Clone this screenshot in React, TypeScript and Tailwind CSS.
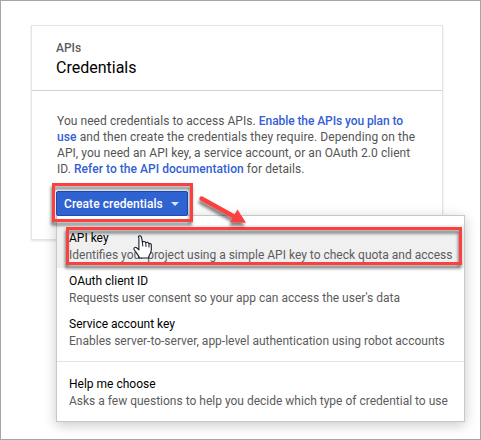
import React from "react";

function MenuItem({ title, text, active }: { title: string; text: string; active?: boolean }) {
  return (
    <div className={`h-[43px] pl-3 pt-[5px] ${active ? "bg-[#f0f0f0]" : ""}`}>
      <div className="text-black">{title}</div>
      <div className="text-[#5c5c5c]">{text}</div>
    </div>
  );
}

export default function App() {
  return (
    <div className="relative h-[440px] w-[481px] overflow-hidden whitespace-nowrap border border-[#a6a6a6] bg-white pl-[30px] pt-6 font-['Roboto',sans-serif] text-xs">
      <div className="h-[215px] w-[412px] border border-[#e5e5e5] bg-white shadow-[0_1px_2px_rgba(0,0,0,0.12)]">
        <header className="h-[65px] border-b border-[#d0d0d0] pl-6 pt-[14px]">
          <div className="text-xs font-medium leading-4 text-[#5c5c5c]">APIs</div>
          <h1 className="pt-[2px] text-base leading-5 text-black">Credentials</h1>
        </header>
        <div className="pl-[25px] pt-[22px] leading-4 tracking-[0.06px] text-[#555]">
          <p>You need credentials to access APIs. <span className="font-medium tracking-[-0.08px] text-[#3460d4]">Enable the APIs you plan to</span></p>
          <p className="tracking-[0.1px]"><span className="font-medium text-[#3460d4]">use</span> and then create the credentials they require. Depending on the</p>
          <p>API, you need an API key, a service account, or an OAuth 2.0 client</p>
          <p className="tracking-[0.08px]">ID. <span className="font-medium tracking-[0.04px] text-[#3460d4]">Refer to the API documentation</span> for details.</p>
        </div>
      </div>

      <div className="absolute left-[55px] top-[214px] h-[207px] w-[409px] border border-[#c8c8c8] bg-white pt-[9px] leading-[17px] shadow-[0_3px_12px_rgba(0,0,0,0.22)]">
        <MenuItem active title="API key" text="Identifies your project using a simple API key to check quota and access" />
        <MenuItem title="OAuth client ID" text="Requests user consent so your app can access the user's data" />
        <MenuItem title="Service account key" text="Enables server-to-server, app-level authentication using robot accounts" />
        <div className="mb-[9px] mt-[7px] h-px bg-[#e3e3e3]" />
        <MenuItem title="Help me choose" text="Asks a few questions to help you decide which type of credential to use" />
      </div>

      <button className="absolute left-[55px] top-[190px] flex h-[25px] w-[132px] items-center rounded-[2px] border border-[#1c4bb8] bg-[#3063d2] pl-[7px] text-xs font-medium tracking-[0.06px] text-white">
        Create credentials
        <span className="ml-[8px] h-0 w-0 border-x-4 border-t-4 border-x-transparent border-t-[#dce5f8]" />
      </button>

      <svg className="pointer-events-none absolute -left-px -top-px" width="481" height="440" viewBox="0 0 481 440">
        <defs>
          <filter id="shade" filterUnits="userSpaceOnUse" x="0" y="0" width="481" height="440">
            <feDropShadow dx="-1" dy="3.5" stdDeviation="1.7" floodColor="#000" floodOpacity="0.5" />
          </filter>
        </defs>
        <g filter="url(#shade)" fill="none" stroke="#fb4141" strokeWidth="3">
          <rect x="53.5" y="184.5" width="138" height="36" />
          <rect x="67.5" y="228.5" width="393" height="35" />
        </g>
        <g filter="url(#shade)" fill="#fb4141" stroke="#fb4141">
          <path d="M201.5 198.5 L234 216.5" strokeWidth="4.5" strokeLinecap="round" />
          <path d="M237.5 209.5 L246 222.7 L230 222.2 Z" stroke="none" />
        </g>
        <path
          d="M138.4 236.5 C139.4 235.2 141.2 235.8 141.5 237.3 L142.4 242.2 C143.4 241 145.2 241.3 145.8 242.7 C147 241.7 148.5 242.3 149 243.7 C150.3 243 151.5 244 151.3 245.6 V250 C151.2 252.5 150 254.3 149 256 L148.5 258 H139.5 C138.8 255.8 136.7 253.4 134.2 249.7 C133.2 247.9 135.1 246.5 136.7 247.8 L138.9 249.9 V238 Z"
          fill="white" stroke="#171b2b" strokeWidth="1.1" strokeLinejoin="round"
        />
        <path d="M142.4 242 L142.8 246 M145.8 242.8 L146 246.5 M149 244 V247" fill="none" stroke="#171b2b" strokeWidth="1" strokeLinecap="round" />
      </svg>
    </div>
  );
}
